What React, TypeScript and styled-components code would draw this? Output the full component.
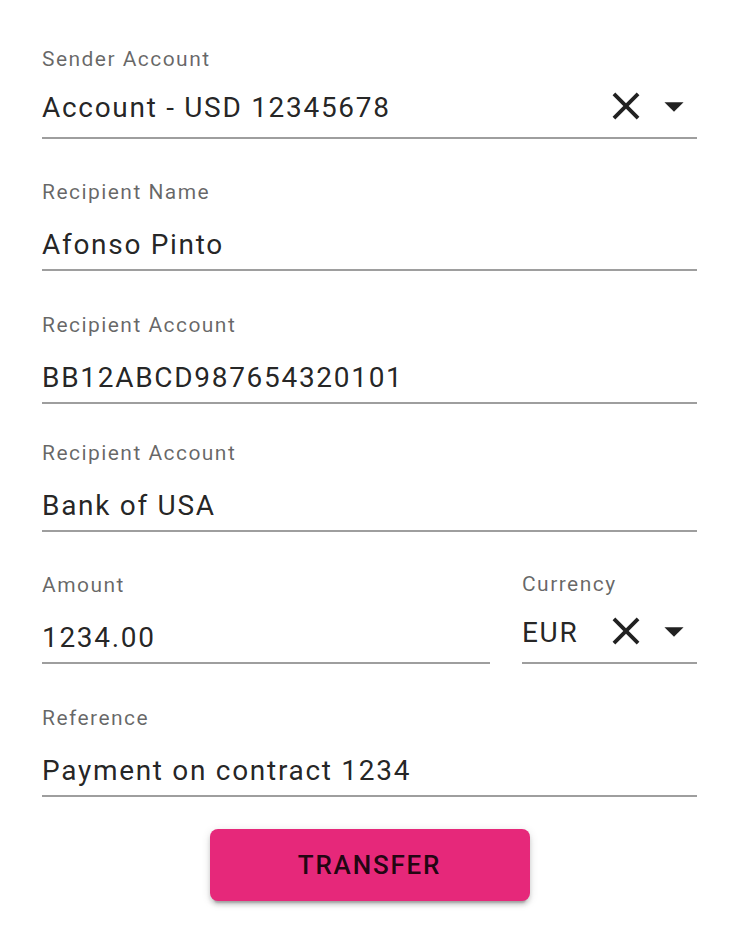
import React from "react";
import styled, { createGlobalStyle } from "styled-components";

const Global = createGlobalStyle`
  html, body { margin: 0; padding: 0; background: #ffffff; }
  body { font-family: Roboto, "Noto Sans", sans-serif; }
`;

const Form = styled.form`
  box-sizing: border-box;
  width: 740px;
  padding: 47px 43px 40px 42px;
  display: flex;
  flex-direction: column;
`;

const Field = styled.div<{ $mt?: number }>`
  display: flex;
  flex-direction: column;
  min-width: 0;
  margin-top: ${(p) => p.$mt ?? 0}px;
  border-bottom: 2px solid #9e9e9e;
`;

const Row = styled.div<{ $mt?: number }>`
  display: grid;
  grid-template-columns: 448px 175px;
  column-gap: 32px;
  align-items: end;
  margin-top: ${(p) => p.$mt ?? 0}px;
`;

const Label = styled.label`
  font-size: 21px;
  line-height: 24px;
  color: rgba(0, 0, 0, 0.6);
  letter-spacing: 1.45px;
  white-space: nowrap;
`;

const Value = styled.div`
  font-size: 28px;
  line-height: 34px;
  letter-spacing: 1.7px;
  color: rgba(0, 0, 0, 0.87);
  margin-top: 24px;
  padding-bottom: 7px;
  white-space: nowrap;
`;

const SelectRow = styled.div`
  display: flex;
  align-items: center;
  height: 46px;
  margin-top: 12px;
  margin-bottom: 8px;
  gap: 2px;
`;

const SelectValue = styled.div`
  flex: 1;
  min-width: 0;
  font-size: 28px;
  line-height: 34px;
  letter-spacing: 1.7px;
  padding-top: 4px;
  color: rgba(0, 0, 0, 0.87);
  white-space: nowrap;
`;

const Icon = styled.svg`
  flex: none;
  width: 46px;
  height: 46px;
  fill: rgba(0, 0, 0, 0.87);
`;

const Button = styled.button`
  align-self: center;
  margin-top: 32px;
  width: 320px;
  height: 72px;
  border: none;
  border-radius: 8px;
  background: #e6287a;
  color: rgba(0, 0, 0, 0.87);
  font-family: Roboto, "Noto Sans", sans-serif;
  font-weight: 500;
  font-size: 26px;
  letter-spacing: 1.8px;
  text-transform: uppercase;
  box-shadow: 0 6px 2px -4px rgba(0, 0, 0, 0.2), 0 4px 4px 0 rgba(0, 0, 0, 0.14),
    0 2px 10px 0 rgba(0, 0, 0, 0.12);
  cursor: pointer;
`;

const CloseIcon = () => (
  <Icon viewBox="0 0 24 24">
    <path d="M19 6.41L17.59 5 12 10.59 6.41 5 5 6.41 10.59 12 5 17.59 6.41 19 12 13.41 17.59 19 19 17.59 13.41 12z" />
  </Icon>
);

const ArrowIcon = () => (
  <Icon viewBox="0 0 24 24">
    <path d="M7 10l5 5 5-5z" />
  </Icon>
);

const TextField = ({ label, value, mt }: { label: string; value: string; mt?: number }) => (
  <Field $mt={mt}>
    <Label>{label}</Label>
    <Value>{value}</Value>
  </Field>
);

const SelectField = ({ label, value, mt }: { label: string; value: string; mt?: number }) => (
  <Field $mt={mt}>
    <Label>{label}</Label>
    <SelectRow>
      <SelectValue>{value}</SelectValue>
      <CloseIcon />
      <ArrowIcon />
    </SelectRow>
  </Field>
);

export default function App() {
  return (
    <>
      <Global />
      <Form onSubmit={(e) => e.preventDefault()}>
        <SelectField label="Sender Account" value="Account - USD 12345678" />
        <TextField label="Recipient Name" value="Afonso Pinto" mt={41} />
        <TextField label="Recipient Account" value="BB12ABCD987654320101" mt={42} />
        <TextField label="Recipient Account" value="Bank of USA" mt={37} />
        <Row $mt={40}>
          <TextField label="Amount" value="1234.00" />
          <SelectField label="Currency" value="EUR" />
        </Row>
        <TextField label="Reference" value="Payment on contract 1234" mt={42} />
        <Button type="submit">Transfer</Button>
      </Form>
    </>
  );
}
